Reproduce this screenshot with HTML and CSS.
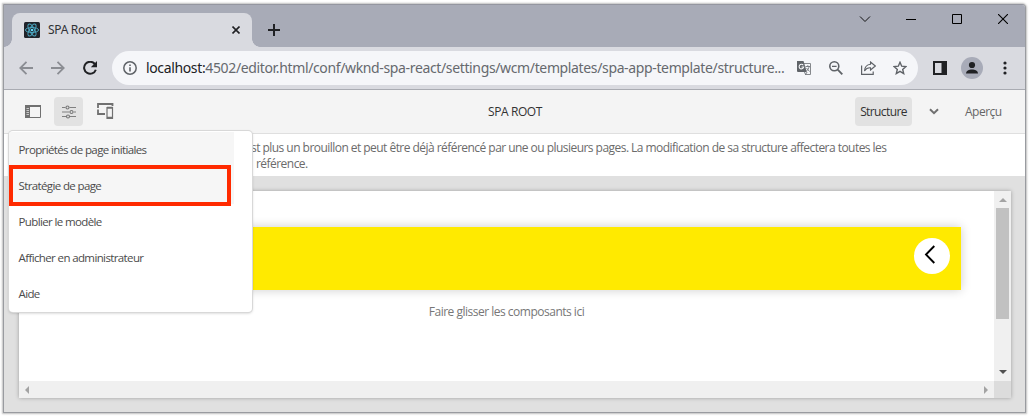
FILE: index.html
```html
<!DOCTYPE html>
<html lang="fr">
<head>
<meta charset="utf-8">
<title>SPA Root</title>
<link rel="stylesheet" href="styles.css">
</head>
<body>
<div class="window">
  <div class="titlebar">
    <div class="tab">
      <svg class="favicon" width="16" height="16" viewBox="0 0 16 16"><rect width="16" height="16" rx="1.500" fill="#20232a"/><g fill="none" stroke="#4aa3bd" stroke-width="1"><ellipse cx="8" cy="8" rx="6.600" ry="2.500"/><ellipse cx="8" cy="8" rx="6.600" ry="2.500" transform="rotate(60 8 8)"/><ellipse cx="8" cy="8" rx="6.600" ry="2.500" transform="rotate(120 8 8)"/></g><circle cx="8" cy="8" r="1.300" fill="#61dafb"/></svg>
      <span class="tab-title">SPA Root</span>
      <svg class="tab-close" width="8" height="8" viewBox="0 0 8 8"><path d="M.5.5l7 7m0-7l-7 7" stroke="#202124" stroke-width="1.600"/></svg>
    </div>
    <svg class="new-tab" width="12" height="12" viewBox="0 0 12 12"><path d="M6 0v12M0 6h12" stroke="#202124" stroke-width="2"/></svg>
    <div class="controls">
      <svg width="12" height="10" viewBox="0 0 12 10"><path d="M1 2.500l5 5 5-5" fill="none" stroke="#111"/></svg>
      <svg width="10" height="10" viewBox="0 0 10 10"><path d="M0 5.500h10" stroke="#000"/></svg>
      <svg width="10" height="10" viewBox="0 0 10 10"><path d="M.5.5h9v9h-9z" fill="none" stroke="#000"/></svg>
      <svg width="10" height="10" viewBox="0 0 10 10"><path d="M0 0l10 10M10 0L0 10" stroke="#000" stroke-width="1.100"/></svg>
    </div>
  </div>
  <div class="toolbar">
    <div class="nav">
      <svg width="14" height="14" viewBox="0 0 14 14"><path d="M14 7H1.500M7.500.8L1.300 7l6.200 6.200" fill="none" stroke="#8b8d93" stroke-width="1.800"/></svg>
      <svg width="14" height="14" viewBox="0 0 14 14"><path d="M0 7h12.500M6.500.8L12.700 7l-6.200 6.200" fill="none" stroke="#8b8d93" stroke-width="1.800"/></svg>
      <svg width="14" height="14" viewBox="0 0 14 14"><path d="M11.800 3A6 6 0 1 0 12.800 8.700" fill="none" stroke="#202124" stroke-width="2"/><path d="M14 0v6.200H7.800z" fill="#202124"/></svg>
    </div>
    <div class="omnibox">
      <svg class="info" width="14" height="14" viewBox="0 0 14 14"><circle cx="7" cy="7" r="6.200" fill="none" stroke="#5f6368" stroke-width="1.500"/><path d="M7 6.200v4.200M7 3.500v1.600" stroke="#5f6368" stroke-width="1.600"/></svg>
      <span class="url"><b>localhost:</b>4502/editor.html/conf/wknd-spa-react/settings/wcm/templates/spa-app-template/structure...</span>
      <div class="omni-icons">
        <svg width="14" height="14" viewBox="0 0 14 14"><path d="M6 2.500h7.500v11H8" fill="none" stroke="#85888c"/><path d="M0 0h6.500l3.300 11H1a1 1 0 0 1-1-1z" fill="#5f6368"/><path d="M6.300 4.200A2.300 2.300 0 1 0 6.700 6H4.500" fill="none" stroke="#f5f6f8" stroke-width="1.100"/><path d="M8.500 5.500H13M10.800 4.200v1.300M12.200 5.500c-.5 2-1.500 3.300-2.700 4.500M9.500 7l3 3.500M7.500 11l1 2.500 1.600-2.500" fill="none" stroke="#70757a" stroke-width=".9"/></svg>
        <svg width="14" height="14" viewBox="0 0 14 14"><circle cx="5.300" cy="5.300" r="4.500" fill="none" stroke="#5f6368" stroke-width="1.600"/><path d="M8.700 8.700l4.600 4.600" stroke="#5f6368" stroke-width="1.900"/><path d="M3 5.300h4.600" stroke="#5f6368" stroke-width="1.200"/></svg>
        <svg width="15" height="14" viewBox="0 0 15 14"><path d="M.6 4.500v8.900h11.600v-3" fill="none" stroke="#5f6368" stroke-width="1.200"/><path d="M9.500 1l4.800 4-4.800 4V6.800C6.800 6.600 5 7.500 3.500 10 3.700 6.500 6 3.700 9.500 3.300z" fill="none" stroke="#5f6368" stroke-width="1.100"/></svg>
        <svg width="14" height="14" viewBox="0 0 14 14"><path d="M7 1.300l1.700 3.900 4.200.4-3.200 2.800 1 4.200L7 10.400l-3.700 2.200 1-4.200L1.100 5.600l4.200-.4z" fill="none" stroke="#5f6368" stroke-width="1.400"/></svg>
      </div>
    </div>
    <svg class="panel" width="14" height="14" viewBox="0 0 14 14"><path d="M1 1h12v12H1z" fill="none" stroke="#202124" stroke-width="2"/><path d="M8.500 1H13v12H8.500z" fill="#202124"/></svg>
    <svg class="avatar" width="22" height="22" viewBox="0 0 22 22"><circle cx="11" cy="11" r="11" fill="#a8abb8"/><circle cx="11" cy="8" r="3.100" fill="#202124"/><path d="M5 16.500c0-5.500 12-5.500 12 0z" fill="#202124"/></svg>
    <svg class="dots" width="4" height="14" viewBox="0 0 4 14"><g fill="#202124"><circle cx="2" cy="2" r="1.600"/><circle cx="2" cy="7" r="1.600"/><circle cx="2" cy="12" r="1.600"/></g></svg>
  </div>
  <header class="header">
    <div class="actions">
      <svg width="16" height="13" viewBox="0 0 16 13"><path d="M.5.500h15v12H.5z" fill="none" stroke="#707070"/><path d="M0 0h5v13H0zM0 0h16v2H0z" fill="#707070"/><path d="M1.500 3.500H4m-2.500 2H4m-2.500 2H4m-2.500 2H4" stroke="#c8c8c8"/></svg>
      <span class="action-on"><svg width="16" height="14" viewBox="0 0 16 14"><path d="M1 2.500h3.500m4 0H15M1 7h7.500m4 0H15M1 11.500h4m4 0h6" stroke="#808080" stroke-width="1.200"/><g fill="none" stroke="#777" stroke-width="1.100"><circle cx="6.500" cy="2.500" r="1.500"/><circle cx="10.500" cy="7" r="1.500"/><circle cx="7" cy="11.500" r="1.500"/></g></svg></span>
      <svg width="17" height="17" viewBox="0 0 17 17"><path d="M1 5V1H15.500v2M1 6.500V11H8" fill="none" stroke="#707070" stroke-width="1.800"/><path d="M10 4.500h5.500v11H10z" fill="#f4f4f4" stroke="#707070" stroke-width="1.200"/><path d="M10 4.800h5.500M10 14.800h5.500" stroke="#707070" stroke-width="2"/></svg>
    </div>
    <span class="page-title">SPA ROOT</span>
    <div class="modes">
      <span class="mode-on"><span class="t-structure">Structure</span></span>
      <svg width="10" height="7" viewBox="0 0 10 7"><path d="M1 1.200l4 4 4-4" fill="none" stroke="#707070" stroke-width="2"/></svg>
      <span class="t-preview">Aperçu</span>
    </div>
  </header>
  <div class="notice"><span class="line1">st plus un brouillon et peut être déjà référencé par une ou plusieurs pages. La modification de sa structure affectera toutes les</span><br><span class="line2">référence.</span></div>
  <main class="canvas">
    <div class="frame">
      <div class="page">
        <div class="banner"><div class="round"><svg width="12" height="20" viewBox="0 0 12 20"><path d="M10.300 1L2 9.500 10.300 18" fill="none" stroke="#000" stroke-width="1.900"/></svg></div></div>
        <div class="drop"><span>Faire glisser les composants ici</span></div>
      </div>
      <div class="vbar"><i class="up"></i><div class="thumb"></div><i class="down"></i></div>
      <div class="hbar"><i class="left"></i><i class="right"></i></div>
      <div class="corner"></div>
    </div>
  </main>
</div>
<div class="menu">
  <div class="item shade"><span class="m1">Propriétés de page initiales</span></div>
  <div class="item shade"><span class="m2">Stratégie de page</span></div>
  <div class="item"><span class="m3">Publier le modèle</span></div>
  <div class="item"><span class="m4">Afficher en administrateur</span></div>
  <div class="item"><span class="m5">Aide</span></div>
</div>
<div class="marker"></div>
</body>
</html>
```
FILE: styles.css
```css
* { box-sizing: border-box; }
body { margin: 0; width: 1032px; height: 416px; background: #fff; overflow: hidden; padding: 4px; font: 12px/16px "Open Sans", sans-serif; letter-spacing: -.4px; color: #4b4b4b; }
svg { display: block; flex: none; }
span { white-space: nowrap; }
.window { width: 1023px; height: 409px; border: 1px solid #999ba0; border-top-color: #9496a0; border-top-right-radius: 4px; box-shadow: 0 0 2px 1px rgba(0,0,0,.25); display: flex; flex-direction: column; overflow: hidden; margin-left: -1px; background: #e0e0e0; }
.titlebar { height: 42px; background: #a8abb7; display: flex; align-items: flex-start; }
.tab { margin: 8px 0 0 8px; width: 240px; height: 34px; border-radius: 8px 8px 0 0; background: #d9dae0; display: flex; align-items: center; padding: 0 12px; position: relative; }
.tab::before, .tab::after { content: ""; position: absolute; bottom: 0; width: 8px; height: 8px; }
.tab::before { left: -8px; background: radial-gradient(circle at 0 0, transparent 7.5px, #d9dae0 8px); }
.tab::after { right: -8px; background: radial-gradient(circle at 100% 0, transparent 7.5px, #d9dae0 8px); }
.tab-title { margin-left: 8px; flex: 1; color: #303236; font: 12px/16px "Noto Sans", sans-serif; letter-spacing: -.3px; }
.new-tab { margin: 19px 0 0 16px; }
.controls { margin: 9px 17px 0 auto; display: flex; gap: 36px; }
.controls svg:first-child { margin-right: -1px; }
.toolbar { height: 42px; background: #d9dae0; display: flex; align-items: center; flex: none; }
.nav { display: flex; gap: 18px; margin-left: 15px; }
.omnibox { margin-left: 15px; width: 806px; height: 34px; border-radius: 17px; background: #f5f6f9; display: flex; align-items: center; padding: 0 11px; }
.url { margin-left: 9px; width: 638px; font: 14px/20px "Noto Sans", sans-serif; letter-spacing: -.36px; color: #66696e; }
.url b { font-weight: 400; color: #202124; }
.omni-icons { display: flex; gap: 18px; margin-left: 13px; }
.omni-icons svg:last-child { margin-left: -1px; }
.panel { margin-left: 15px; }
.avatar { margin-left: 14px; }
.dots { margin-left: 20px; }
.header { height: 45px; flex: none; background: #f4f4f4; border-top: 1px solid #a9abb2; border-bottom: 1px solid #dfdfdf; display: grid; grid-template-columns: 1fr auto 1fr; align-items: center; }
.actions { display: flex; align-items: center; margin-left: 21px; }
.action-on { width: 29px; height: 29px; border-radius: 4px; background: #e2e2e2; display: grid; place-items: center; margin: 0 14px 0 13px; }
.page-title { color: #323232; padding-left: 1px; }
.modes { display: flex; align-items: center; justify-content: flex-end; padding-right: 23px; }
.mode-on { width: 57px; height: 29px; border-radius: 4px; background: #e2e2e2; display: grid; place-items: center; color: #323232; margin-right: 17px; letter-spacing: -.6px; }
.t-preview { margin-left: 26px; width: 37px; color: #666; letter-spacing: -.5px; }
.notice { height: 42px; flex: none; background: #fff; padding: 6px 0 0 247px; color: #6b6b6b; letter-spacing: -.54px; }
.line2 { margin-left: 5px; }
.canvas { flex: 1; background: #e0e0e0; padding: 15px 14px 14px 15px; }
.frame { width: 992px; height: 207px; display: grid; grid-template: 190px 17px / 975px 17px; box-shadow: 0 0 4px rgba(0,0,0,.3); background: #fff; }
.page { padding: 36px 33px 0 36px; }
.banner { height: 63px; background: #ffea00; box-shadow: 0 0 10px rgba(0,0,0,.2); display: flex; justify-content: flex-end; padding: 11px; }
.round { width: 36px; height: 36px; border-radius: 50%; background: #fff; padding: 7px 0 0 10px; }
.drop { text-align: center; margin: 14px 3px 0 0; color: #777; letter-spacing: -.5px; }
.vbar { background: #f0f0f0; display: flex; flex-direction: column; align-items: center; }
.thumb { width: 13px; height: 111px; background: #c1c1c1; margin-top: 6px; }
.up { border: 4px solid transparent; border-top: 0; border-bottom-color: #a3a3a3; margin-top: 7px; }
.down { border: 4px solid transparent; border-bottom: 0; border-top-color: #505050; margin: auto 0 7px; }
.hbar { background: #f0f0f0; display: flex; justify-content: space-between; align-items: center; padding: 0 6px; }
.left { border: 4px solid transparent; border-left: 0; border-right-color: #a3a3a3; }
.right { border: 4px solid transparent; border-right: 0; border-left-color: #a3a3a3; }
.corner { background: #dcdcdc; }
.menu { position: absolute; left: 9px; top: 131px; width: 243px; height: 181px; border-radius: 4px; background: #fff; box-shadow: 0 0 0 1px #d8d8d8, 0 1px 3px rgba(0,0,0,.25); padding-top: 1px; overflow: hidden; color: #4b4b4b; font-size: 11.5px; letter-spacing: -.62px; }
.item { height: 36px; padding: 10px 0 0 9.5px; }
.shade { width: 225px; background: #f6f6f6; }
.marker { position: absolute; left: 9px; top: 165px; width: 222px; height: 41px; border: 4px solid #ff2a00; }
```
